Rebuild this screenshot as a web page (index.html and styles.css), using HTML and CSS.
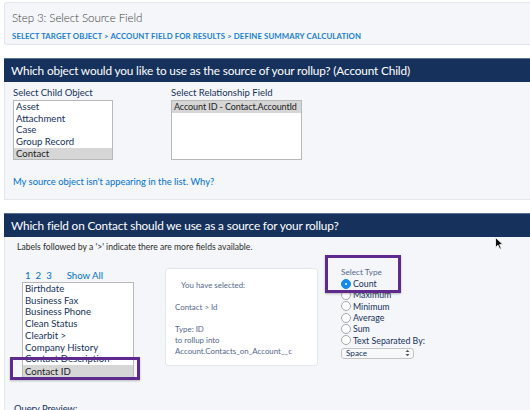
FILE: index.html
```html
<!DOCTYPE html>
<html>
<head>
<meta charset="utf-8">
<link rel="stylesheet" href="styles.css">
</head>
<body>
<div class="page">
  <div class="step-card">
    <div class="step-title">Step 3: Select Source Field</div>
    <div class="crumbs">SELECT TARGET OBJECT &gt; ACCOUNT FIELD FOR RESULTS &gt; DEFINE SUMMARY CALCULATION</div>
  </div>

  <div class="section s1">
    <div class="section-head">Which object would you like to use as the source of your rollup? (Account Child)</div>
    <div class="section-body body1">
      <div class="pickers">
        <div class="picker">
          <div class="label">Select Child Object</div>
          <div class="listbox child-list">
            <div class="opt">Asset</div>
            <div class="opt">Attachment</div>
            <div class="opt">Case</div>
            <div class="opt">Group Record</div>
            <div class="opt sel">Contact</div>
          </div>
        </div>
        <div class="picker">
          <div class="label">Select Relationship Field</div>
          <div class="listbox rel-list">
            <div class="opt sel">Account ID - Contact.AccountId</div>
          </div>
        </div>
      </div>
      <div class="why">My source object isn't appearing in the list. Why?</div>
    </div>
  </div>

  <div class="section s2">
    <div class="section-head">Which field on Contact should we use as a source for your rollup?</div>
    <div class="section-body body2">
      <div class="hint">Labels followed by a '&gt;' indicate there are more fields available.</div>
      <div class="cols">
        <div class="col-fields">
          <div class="pager"><span>1</span><span>2</span><span>3</span><span class="all">Show All</span></div>
          <div class="listbox field-list">
            <div class="opt">Birthdate</div>
            <div class="opt">Business Fax</div>
            <div class="opt">Business Phone</div>
            <div class="opt">Clean Status</div>
            <div class="opt">Clearbit &gt;</div>
            <div class="opt">Company History</div>
            <div class="opt">Contact Description</div>
            <div class="opt sel">Contact ID</div>
          </div>
        </div>
        <div class="selected-card">
          <div class="sc-head">You have selected:</div>
          <div class="sc-line gap">Contact &gt; Id</div>
          <div class="sc-line gap">Type: ID</div>
          <div class="sc-line">to rollup into</div>
          <div class="sc-line">Account.Contacts_on_Account__c</div>
        </div>
        <div class="type-col">
          <div class="type-label">Select Type</div>
          <div class="radio checked"><span class="dot"></span>Count</div>
          <div class="radio"><span class="dot"></span>Maximum</div>
          <div class="radio"><span class="dot"></span>Minimum</div>
          <div class="radio"><span class="dot"></span>Average</div>
          <div class="radio"><span class="dot"></span>Sum</div>
          <div class="radio"><span class="dot"></span>Text Separated By:</div>
          <div class="fake-select"><span>Space</span>
            <svg class="arrows" width="5" height="8" viewBox="0 0 5 8"><path d="M0.5 3 L2.5 0.8 L4.5 3 Z M0.5 5 L2.5 7.2 L4.5 5 Z" fill="#555"/></svg>
          </div>
        </div>
      </div>
      <div class="preview">Query Preview:</div>
      <div class="hl hl-field"></div>
      <div class="hl hl-type"></div>
      <svg class="cursor" width="9" height="13" viewBox="0 0 9 13"><path d="M0.5 0.5 L0.5 10.5 L3 8.2 L4.8 12.2 L6.3 11.5 L4.6 7.6 L8 7.6 Z" fill="#111" stroke="#fff" stroke-width="0.8"/></svg>
    </div>
  </div>
</div>
</body>
</html>
```

FILE: styles.css
```css
html, body {
  margin: 0;
  padding: 0;
  background: #ffffff;
  overflow: hidden;
}
body {
  font-family: "Lato", "Open Sans", sans-serif;
  color: #16325c;
}
.page {
  padding: 2px 0 0 4px;
  width: 540px;
}
.step-card {
  background: #f4f6f9;
  border: 1px solid #e2e6ed;
  border-right: none;
  border-radius: 3px 0 0 3px;
  height: 43px;
  padding: 0 0 0 7px;
  box-sizing: border-box;
}
.step-title {
  font-size: 11.6px;
  font-weight: 300;
  color: #3e3e3c;
  padding-top: 7px;
  line-height: 16px;
  letter-spacing: -0.1px;
}
.crumbs {
  font-size: 7.8px;
  font-weight: 700;
  color: #1a7fd6;
  margin-top: 5px;
  line-height: 10px;
  letter-spacing: 0.1px;
}
.section {
  margin-top: 13px;
}
.section-head {
  background: #16325c;
  border-top: 1px solid #56718f;
  color: #ffffff;
  font-size: 11.8px;
  letter-spacing: -0.15px;
  height: 23px;
  line-height: 23px;
  padding-left: 7px;
  white-space: nowrap;
}
.section-body {
  background: #f4f6f9;
  border-left: 1px solid #e2e6ed;
  border-bottom: 1px solid #e2e6ed;
  position: relative;
}
.body1 {
  height: 118px;
  padding: 5px 0 0 8px;
  box-sizing: border-box;
}
.pickers {
  display: flex;
  gap: 58px;
}
.label {
  font-size: 9.5px;
  line-height: 12px;
  color: #16325c;
}
.listbox {
  background: #ffffff;
  border: 1px solid #b8b8b8;
  margin-top: 1px;
  overflow: hidden;
  box-sizing: border-box;
  font-size: 9.6px;
  color: #16325c;
}
.opt {
  padding-left: 2px;
  line-height: 11.7px;
  white-space: nowrap;
}
.opt.sel {
  background: #d6d6d6;
  color: #222;
}
.child-list {
  width: 100px;
  height: 60px;
}
.rel-list {
  width: 131px;
  height: 60px;
}
.rel-list .opt {
  line-height: 12px;
  color: #222;
  font-size: 9px;
  letter-spacing: -0.1px;
}
.why {
  margin-top: 16px;
  font-size: 9.4px;
  color: #0070d2;
  line-height: 12px;
}
.body2 {
  height: 200px;
  padding: 5px 0 0 12px;
  box-sizing: border-box;
}
.hint {
  font-size: 8.6px;
  color: #2b2b2b;
  line-height: 11px;
}
.cols {
  display: flex;
  margin-top: 17px;
}
.col-fields {
  width: 112px;
  margin-left: 5px;
}
.pager {
  display: flex;
  gap: 5px;
  font-size: 9.6px;
  color: #0070d2;
  line-height: 11px;
  padding-left: 3px;
}
.pager .all {
  margin-left: 10px;
}
.field-list {
  width: 112px;
  height: 96px;
  margin-top: 1px;
  position: relative;
}
.field-list .opt.sel {
  margin-top: 0.5px;
  line-height: 14px;
}
.selected-card {
  margin-left: 31px;
  width: 153px;
  height: 98px;
  margin-top: -2px;
  background: #ffffff;
  border: 1px solid #e2e6ed;
  border-radius: 3px;
  box-sizing: border-box;
  padding: 11px 0 0 9px;
  font-size: 7.9px;
  color: #54698d;
  line-height: 11px;
}
.sc-head {
  padding-left: 6px;
}
.sc-line.gap {
  margin-top: 11px;
}
.type-col {
  margin-left: 23px;
  margin-top: -3px;
  font-size: 8.8px;
  color: #16325c;
}
.type-label {
  color: #54698d;
  font-size: 8.2px;
  line-height: 11px;
}
.radio {
  display: flex;
  align-items: center;
  height: 11.3px;
  line-height: 11px;
}
.dot {
  width: 8px;
  height: 8px;
  border: 1px solid #a8a8a8;
  border-radius: 50%;
  background: #ffffff;
  margin-right: 2px;
  flex: none;
}
.radio.checked .dot {
  background: #1589ee;
  border-color: #1589ee;
  position: relative;
}
.radio.checked .dot::after {
  content: "";
  position: absolute;
  left: 3px;
  top: 3px;
  width: 2px;
  height: 2px;
  border-radius: 50%;
  background: #ffffff;
}
.fake-select {
  margin-top: 2px;
  width: 73px;
  height: 11px;
  border: 1px solid #c4c4c4;
  border-radius: 3px;
  background: #f7f8fa;
  box-sizing: border-box;
  display: flex;
  align-items: center;
  justify-content: space-between;
  padding: 0 3px 0 4px;
  font-size: 8.2px;
  color: #16325c;
}
.preview {
  position: absolute;
  left: 9px;
  top: 166px;
  font-size: 9.4px;
  color: #16325c;
}
.hl {
  position: absolute;
  border: 3px solid #5e2a8d;
  box-sizing: border-box;
  box-shadow: 0 1px 2px rgba(0,0,0,0.25);
}
.hl-field {
  left: 5px;
  top: 120px;
  width: 130px;
  height: 23px;
}
.hl-type {
  left: 320px;
  top: 18px;
  width: 76px;
  height: 38px;
}
.cursor {
  position: absolute;
  left: 490px;
  top: 0px;
}
```
